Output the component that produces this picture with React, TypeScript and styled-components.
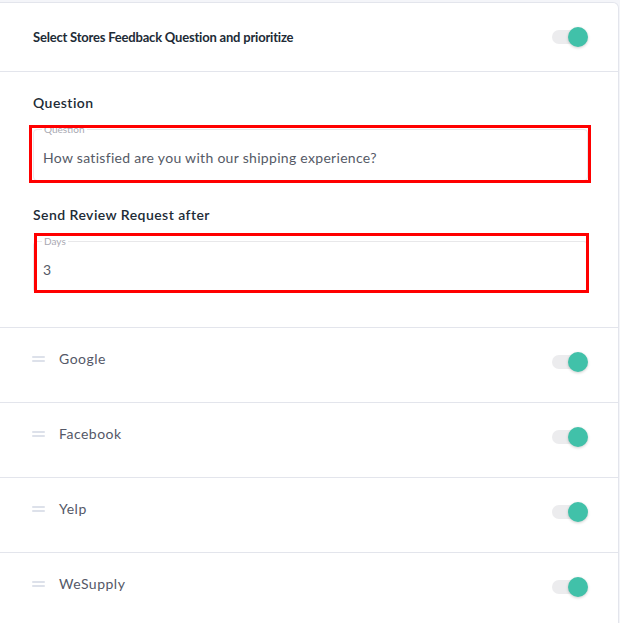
import React from "react";
import styled, { createGlobalStyle } from "styled-components";

const Global = createGlobalStyle`
  html, body { margin: 0; padding: 0; background: #f4f5f9; }
  body { font-family: "Lato", "Open Sans", sans-serif; color: #212b36; }
  * { box-sizing: border-box; }
`;

const Page = styled.div`
  padding: 2px 1px 0 0;
  width: 620px;
`;

const Card = styled.div`
  background: #fff;
  border: 1px solid #e3e5ec;
  border-left: 0;
  border-radius: 0 6px 0 0;
`;

const Header = styled.div`
  height: 69px;
  display: flex;
  align-items: center;
  justify-content: space-between;
  padding: 0 30px 1px 33px;
  border-bottom: 1px solid #e3e5ec;
`;

const Title = styled.div`
  font-size: 13px;
  font-weight: 700;
  letter-spacing: -0.2px;
  color: #212b36;
`;

const FormSection = styled.div`
  display: flex;
  flex-direction: column;
  padding: 21px 30px 34px 33px;
  border-bottom: 1px solid #e3e5ec;
`;

const Label = styled.div<{ $gap: number }>`
  font-size: 14px;
  line-height: 20px;
  font-weight: 600;
  letter-spacing: 0.45px;
  color: #212b36;
  margin-top: ${(p) => p.$gap}px;
`;

const FieldWrap = styled.div<{ $t: number; $l: number; $r: number; $b: number; $mt: number }>`
  position: relative;
  margin-top: ${(p) => p.$mt}px;
  &::after {
    content: "";
    position: absolute;
    top: ${(p) => p.$t}px;
    left: ${(p) => p.$l}px;
    right: ${(p) => p.$r}px;
    bottom: ${(p) => p.$b}px;
    border: 3px solid #ff0000;
    pointer-events: none;
  }
`;

const Fieldset = styled.fieldset`
  margin: 0;
  height: 58px;
  border: 1px solid #e8e8ea;
  border-radius: 4px;
  padding: 0 8px 0 8px;
  display: flex;
  flex-direction: column;
`;

const Legend = styled.legend`
  font-size: 10px;
  line-height: 12px;
  color: #a9a9b2;
  padding: 0 2px;
`;

const Value = styled.div`
  margin-top: 13px;
  padding-left: 1px;
  font-size: 14px;
  line-height: 20px;
  letter-spacing: 0.3px;
  color: #555a66;
`;

const Row = styled.div<{ $last?: boolean }>`
  height: 75px;
  display: flex;
  align-items: flex-start;
  padding: 0 30px 0 32px;
  border-bottom: ${(p) => (p.$last ? "0" : "1px solid #e3e5ec")};
`;

const Handle = styled.div`
  width: 13px;
  margin-top: 28px;
  display: flex;
  flex-direction: column;
  gap: 2px;
  &::before, &::after {
    content: "";
    height: 2px;
    background: #dde1ea;
    border-radius: 1px;
  }
`;

const RowName = styled.div`
  margin-left: 14px;
  margin-top: 21px;
  font-size: 14px;
  line-height: 20px;
  letter-spacing: 0.5px;
  color: #545867;
  flex: 1;
`;

const Toggle = styled.div<{ $mt?: number }>`
  position: relative;
  width: 36px;
  height: 20px;
  margin-top: ${(p) => p.$mt ?? 0}px;
  &::before {
    content: "";
    position: absolute;
    left: 0;
    top: 3px;
    width: 34px;
    height: 14px;
    border-radius: 7px;
    background: #ececee;
  }
`;

const Knob = styled.span`
  position: absolute;
  right: 0;
  top: 0;
  width: 20px;
  height: 20px;
  border-radius: 50%;
  background: #41c1a9;
  box-shadow: 0 1px 3px rgba(0, 0, 0, 0.2);
`;

const stores = ["Google", "Facebook", "Yelp", "WeSupply"];

export default function App() {
  return (
    <>
      <Global />
      <Page>
        <Card>
          <Header>
            <Title>Select Stores Feedback Question and prioritize</Title>
            <Toggle>
              <Knob />
            </Toggle>
          </Header>
          <FormSection>
            <Label $gap={0}>Question</Label>
            <FieldWrap $mt={10} $t={2} $l={-4} $r={-3} $b={-2}>
              <Fieldset>
                <Legend>Question</Legend>
                <Value>How satisfied are you with our shipping experience?</Value>
              </Fieldset>
            </FieldWrap>
            <Label $gap={24}>Send Review Request after</Label>
            <FieldWrap $mt={10} $t={-2} $l={1} $r={-1} $b={0}>
              <Fieldset>
                <Legend>Days</Legend>
                <Value>3</Value>
              </Fieldset>
            </FieldWrap>
          </FormSection>
          {stores.map((s, i) => (
            <Row key={s} $last={i === stores.length - 1}>
              <Handle />
              <RowName>{s}</RowName>
              <Toggle $mt={24}>
                <Knob />
              </Toggle>
            </Row>
          ))}
        </Card>
      </Page>
    </>
  );
}
